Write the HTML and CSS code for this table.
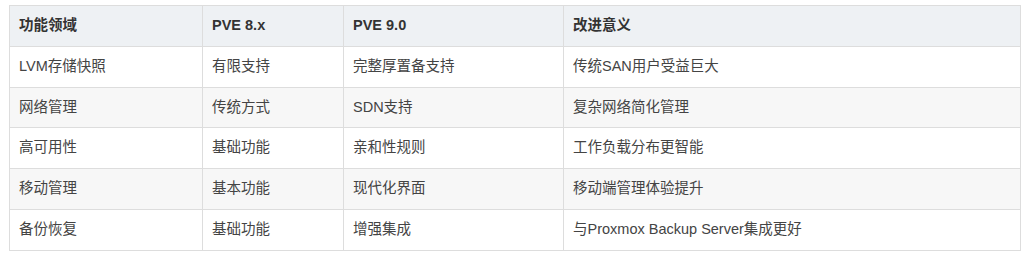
FILE: index.html
```html
<!DOCTYPE html>
<html lang="zh-CN">
<head>
<meta charset="utf-8">
<title>PVE 对比</title>
<link rel="stylesheet" href="styles.css">
</head>
<body>
<div class="wrap">
<table class="cmp">
<colgroup>
<col class="c1"><col class="c2"><col class="c3"><col class="c4">
</colgroup>
<thead>
<tr><th>功能领域</th><th>PVE 8.x</th><th>PVE 9.0</th><th>改进意义</th></tr>
</thead>
<tbody>
<tr><td>LVM存储快照</td><td>有限支持</td><td>完整厚置备支持</td><td>传统SAN用户受益巨大</td></tr>
<tr><td>网络管理</td><td>传统方式</td><td>SDN支持</td><td>复杂网络简化管理</td></tr>
<tr><td>高可用性</td><td>基础功能</td><td>亲和性规则</td><td>工作负载分布更智能</td></tr>
<tr><td>移动管理</td><td>基本功能</td><td>现代化界面</td><td>移动端管理体验提升</td></tr>
<tr><td>备份恢复</td><td>基础功能</td><td>增强集成</td><td>与Proxmox Backup Server集成更好</td></tr>
</tbody>
</table>
</div>
</body>
</html>
```
FILE: styles.css
```css
html, body {
  margin: 0;
  padding: 0;
  background: #ffffff;
}
.wrap {
  padding: 5px 0 0 9px;
}
.cmp {
  border-collapse: collapse;
  table-layout: fixed;
  width: 1011px;
  font-family: "Liberation Sans", "Noto Sans CJK SC", sans-serif;
  font-size: 14.5px;
  color: #444;
}
.c1 { width: 193px; }
.c2 { width: 141px; }
.c3 { width: 220px; }
.c4 { width: 457px; }
.cmp th, .cmp td {
  border: 1px solid #dddddd;
  padding: 10px 9px;
  line-height: 19.8px;
  text-align: left;
  white-space: nowrap;
}
.cmp th {
  background: #eef1f4;
  color: #333;
  font-weight: bold;
}
.cmp tbody tr:nth-child(even) td {
  background: #f7f7f7;
}
```
